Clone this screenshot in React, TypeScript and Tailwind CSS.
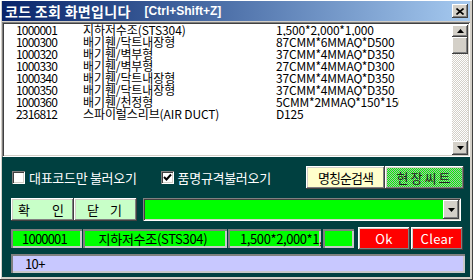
import React from "react";

const raised =
  "shadow-[inset_-1px_-1px_#404040,inset_1px_1px_#ffffff,inset_-2px_-2px_#808080,inset_2px_2px_#d4d0c8]";
const sunken =
  "shadow-[inset_1px_1px_#808080,inset_-1px_-1px_#ffffff,inset_2px_2px_#404040,inset_-2px_-2px_#d4d0c8]";
const field =
  "shadow-[inset_2px_2px_#808080,inset_-2px_-2px_#c8c8c8]";

const rows: [string, string, string][] = [
  ["1000001", "지하저수조(STS304)", "1,500*2,000*1,000"],
  ["1000300", "배기휀/닥트내장형", "87CMM*6MMAQ*D500"],
  ["1000320", "배기휀/벽부형", "37CMM*4MMAQ*D350"],
  ["1000330", "배기휀/벽부형", "27CMM*4MMAQ*D300"],
  ["1000340", "배기휀/닥트내장형", "37CMM*4MMAQ*D350"],
  ["1000350", "배기휀/닥트내장형", "37CMM*4MMAQ*D350"],
  ["1000360", "배기휀/천정형", "5CMM*2MMAQ*150*150"],
  ["2316812", "스파이럴스리브(AIR DUCT)", "D125"],
];

function Arrow({ down }: { down?: boolean }) {
  return (
    <svg width="7" height="4" viewBox="0 0 7 4">
      {down ? (
        <polygon points="0,0 7,0 3.5,4" fill="#000" />
      ) : (
        <polygon points="0,4 7,4 3.5,0" fill="#000" />
      )}
    </svg>
  );
}

export default function App() {
  return (
    <div
      className="w-[473px] h-[280px] bg-[#d4d0c8] pl-[2px] pr-[3px] pt-[1px] pb-[3px] flex flex-col overflow-hidden shadow-[inset_-1px_-1px_#404040,inset_1px_1px_#ffffff]"
      style={{ fontFamily: '"Noto Sans CJK KR", "Noto Sans", sans-serif' }}
    >
      {/* Title bar */}
      <div className="h-[20px] shrink-0 flex items-center pl-[3px] pr-[2px] bg-gradient-to-r from-[#0a246a] to-[#a6caf0]">
        <span className="text-white font-bold text-[14px] leading-none tracking-[0.3px] whitespace-nowrap">
          코드 조회 화면입니다
        </span>
        <span
          className="text-white font-bold text-[12px] leading-none ml-[14px] whitespace-nowrap"
          style={{ fontFamily: '"Liberation Sans", Arial, sans-serif' }}
        >
          [Ctrl+Shift+Z]
        </span>
        <div className={`ml-auto w-[16px] h-[14px] bg-[#d4d0c8] flex items-center justify-center ${raised}`}>
          <svg width="8" height="7" viewBox="0 0 8 7">
            <path d="M0.5 0.5 L7.5 6.5 M7.5 0.5 L0.5 6.5" stroke="#000" strokeWidth="1.6" />
          </svg>
        </div>
      </div>
      <div className="h-[1px] shrink-0" />

      {/* List box */}
      <div className={`h-[135px] shrink-0 bg-white flex p-[2px] ${sunken}`}>
        <div className="flex-1 overflow-hidden">
          {rows.map((r, i) => (
            <div key={i} className="flex h-[12px] items-center text-[12px] leading-[12px] text-black whitespace-nowrap">
              <div className="w-[79px] pl-[12px] tracking-[-0.8px]">{r[0]}</div>
              <div className="w-[193px] tracking-[-0.1px]">{r[1]}</div>
              <div className="w-[123px] overflow-hidden tracking-[-0.2px]">{r[2]}</div>
            </div>
          ))}
        </div>
        <div className="w-[16px] flex flex-col">
          <div className="h-[1px]" />
          <div className={`h-[12px] bg-[#d4d0c8] flex items-center justify-center ${raised}`}>
            <Arrow />
          </div>
          <div className={`h-[17px] bg-[#d4d0c8] ${raised}`} />
          <div className="flex-1 bg-[image:repeating-conic-gradient(#d4d0c8_0_25%,#ffffff_0_50%)] bg-[length:2px_2px] bg-size-[2px_2px]" />
          <div className={`h-[14px] bg-[#d4d0c8] flex items-center justify-center ${raised}`}>
            <Arrow down />
          </div>
        </div>
      </div>

      {/* Teal panel */}
      <div className="flex-1 bg-[#004040] pl-[9px] pr-[5px] pt-[9px] flex flex-col">
        {/* Row 1 */}
        <div className="h-[23px] flex items-center">
          <div className="w-[13px] h-[13px] ml-[1px] bg-white shadow-[inset_1px_1px_#808080,inset_-1px_-1px_#ffffff,inset_2px_2px_#404040,inset_-2px_-2px_#d4d0c8]" />
          <span className="ml-[4px] text-white text-[13px] tracking-[-0.3px] whitespace-nowrap leading-none">
            대표코드만 불러오기
          </span>
          <div className="ml-[24px] w-[13px] h-[13px] bg-white flex items-center justify-center shadow-[inset_1px_1px_#808080,inset_-1px_-1px_#ffffff,inset_2px_2px_#404040,inset_-2px_-2px_#d4d0c8]">
            <svg width="9" height="9" viewBox="0 0 9 9">
              <path d="M1 4 L3.5 6.5 L8 1.5" stroke="#000" strokeWidth="2" fill="none" />
            </svg>
          </div>
          <span className="ml-[4px] text-white text-[13px] tracking-[-0.3px] whitespace-nowrap leading-none">
            품명규격불러오기
          </span>
          <div className={`ml-auto w-[79px] h-[23px] bg-[#ffffcc] flex items-center justify-center text-[13px] tracking-[-1px] text-black ${raised}`}>
            명칭순검색
          </div>
          <div className={`w-[79px] h-[23px] mr-[1px] flex items-center justify-center text-[13px] tracking-[2px] text-[#202020] bg-[image:repeating-conic-gradient(#00ff00_0_25%,#b0b0b0_0_50%)] bg-[length:2px_2px] bg-size-[2px_2px] ${raised}`}>
            현장씨트
          </div>
        </div>

        {/* Row 2 */}
        <div className="h-[23px] mt-[9px] flex items-center">
          <div className={`w-[63px] h-[23px] bg-[#c8ffc8] flex items-center justify-between pl-[7px] pr-[10px] text-[13px] text-black ${raised}`}>
            <span>확</span>
            <span>인</span>
          </div>
          <div className={`w-[63px] h-[23px] bg-[#c8ffc8] flex items-center justify-between pl-[13px] pr-[15px] text-[13px] text-black ${raised}`}>
            <span>닫</span>
            <span>기</span>
          </div>
          <div className={`ml-[6px] w-[318px] h-[23px] bg-[#00ff00] flex items-center justify-end p-[2px] ${sunken}`}>
            <div className={`w-[16px] h-[19px] bg-[#d4d0c8] flex items-center justify-center ${raised}`}>
              <Arrow down />
            </div>
          </div>
        </div>

        {/* Row 3 */}
        <div className="h-[23px] mt-[6px] flex items-center">
          <div className={`w-[71px] h-[19px] bg-[#00ff00] flex items-center justify-center pr-[4px] text-[13px] tracking-[-0.8px] text-black ${field}`}>
            1000001
          </div>
          <div className={`ml-[1px] w-[144px] h-[19px] bg-[#00ff00] flex items-center justify-center pr-[4px] text-[13px] tracking-[-0.3px] text-black whitespace-nowrap ${field}`}>
            지하저수조(STS304)
          </div>
          <div className={`ml-[1px] w-[93px] h-[19px] bg-[#00ff00] flex items-center overflow-hidden pl-[12px] text-[13px] tracking-[-0.4px] text-black whitespace-nowrap ${field}`}>
            1,500*2,000*1,000
          </div>
          <div className={`ml-[2px] w-[31px] h-[19px] bg-[#00ff00] ${field}`} />
          <div className={`ml-[4px] w-[52px] h-[23px] bg-[#ff0000] flex items-center justify-center text-white text-[13px] tracking-[0.3px] ${raised}`}>
            Ok
          </div>
          <div className={`ml-[1px] w-[52px] h-[23px] bg-[#ff0000] flex items-center justify-center text-white text-[13px] tracking-[0.3px] ${raised}`}>
            Clear
          </div>
        </div>

        {/* Row 4 */}
        <div className={`h-[19px] mt-[4px] bg-[#c8c8ff] flex items-center pl-[14px] text-[13px] tracking-[-0.6px] text-black ${field}`}>
          10+
        </div>
      </div>
    </div>
  );
}
